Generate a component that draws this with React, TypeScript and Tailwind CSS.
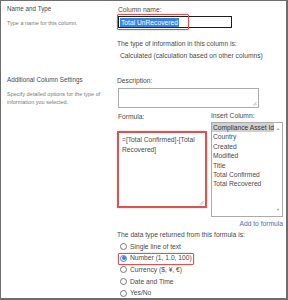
import React from "react";

// SharePoint "Create Column" form, formula section
const columns = [
  "Compliance Asset Id",
  "Country",
  "Created",
  "Modified",
  "Title",
  "Total Confirmed",
  "Total Recovered",
];

const dataTypes = [
  { label: "Single line of text", checked: false },
  { label: "Number (1, 1.0, 100)", checked: true },
  { label: "Currency ($, ¥, €)", checked: false },
  { label: "Date and Time", checked: false },
  { label: "Yes/No", checked: false },
];

const Grip = () => (
  <svg className="absolute right-[1px] bottom-[1px]" width="5" height="5" viewBox="0 0 5 5" aria-hidden="true">
    <path d="M4.5 1 L1 4.5 M4.5 3 L3 4.5" stroke="#9a9a9a" strokeWidth="0.7" />
  </svg>
);

const Radio = ({ checked }: { checked: boolean }) => (
  <span
    className={`w-[7px] h-[7px] rounded-full border flex items-center justify-center shrink-0 ${
      checked ? "border-[#3b82e6] bg-white" : "border-[#777] bg-white"
    }`}
  >
    {checked && <span className="w-[4px] h-[4px] rounded-full bg-[#3b82e6]" />}
  </span>
);

export default function App() {
  return (
    <div className="w-[288px] h-[300px] bg-white border-l border-t border-r-2 border-b-2 border-[#6e6e6e] overflow-hidden font-['Liberation_Sans',Arial,sans-serif] text-[#4a4a4a]">
      {/* --- NAME AND TYPE --- */}
      <div className="flex h-[67px]">
        <div className="w-[116px] pl-[6px] pt-[4px]">
          <h3 className="text-[6.3px] leading-[8px] text-[#4a4a4a]">Name and Type</h3>
          <p className="mt-[7px] text-[5.5px] leading-[7px] text-[#7a7a7a]">Type a name for this column.</p>
        </div>
        <div className="flex-1 pt-[4px] text-[6.7px]">
          <div className="leading-[10px] pl-[1px]">Column name:</div>
          <div className="relative mt-[1px] ml-[1px] w-[114px] h-[12px] border-[1.5px] border-[#1c1c1c] flex items-center pl-[1px]">
            <span className="bg-[#3a84e0] text-white leading-[9px] px-[1px]">Total UnRecovered</span>
            <div className="absolute -left-[2.5px] -top-[3.5px] w-[72px] h-[16px] border-[1.5px] border-[#e05252] rounded-[1px] shadow-[0_0_2px_rgba(0,0,0,0.25)]" />
          </div>
          <div className="mt-[11px] leading-[10px]">The type of information in this column is:</div>
          <div className="mt-[2px] pl-[3px] leading-[10px]">Calculated (calculation based on other columns)</div>
        </div>
      </div>

      {/* --- ADDITIONAL COLUMN SETTINGS --- */}
      <div className="flex">
        <div className="w-[116px] pl-[6px] pt-[8px]">
          <h3 className="text-[6.3px] leading-[8px] text-[#4a4a4a]">Additional Column Settings</h3>
          <p className="mt-[6px] text-[5.5px] leading-[8px] text-[#7a7a7a]">
            Specify detailed options for the type of
            <br />
            information you selected.
          </p>
        </div>
        <div className="flex-1 pt-[8px] text-[6.7px]">
          <div className="leading-[10px]">Description:</div>
          <div className="relative mt-[2px] ml-[1px] w-[141px] h-[20px] border border-[#ababab]">
            <Grip />
          </div>

          <div className="flex items-start mt-[3px]">
            <div className="w-[90px]">
              <div className="leading-[10px] pl-[1px] mt-[1px]">Formula:</div>
              <div className="relative mt-[9px] h-[77px] border-2 border-[#e05252] shadow-[0_0_2px_rgba(0,0,0,0.2)] px-[3px] pt-[2px] leading-[10px]">
                =[Total Confirmed]-[Total Recovered]
                <Grip />
              </div>
            </div>
            <div className="ml-[4px] w-[72px]">
              <div className="leading-[10px]">Insert Column:</div>
              <div className="mt-[1px] h-[95px] border border-[#ababab] flex">
                <ul className="flex-1">
                  {columns.map((c, i) => (
                    <li
                      key={c}
                      className={`leading-[9.4px] pl-[1px] whitespace-nowrap overflow-hidden ${i === 0 ? "bg-[#d0d0d0] text-[#333]" : ""}`}
                    >
                      {c}
                    </li>
                  ))}
                </ul>
                <div className="w-[9px] flex flex-col justify-between items-center text-[#a8a8a8] text-[4px] py-[3px]">
                  <span>▲</span>
                  <span>▼</span>
                </div>
              </div>
            </div>
          </div>

          <div className="w-[166px] text-right mt-[2px] leading-[10px] text-[#3b76b0]">Add to formula</div>
          <div className="mt-[1px] leading-[10px]">The data type returned from this formula is:</div>

          <div className="mt-[1px]">
            {dataTypes.map((d) => (
              <div key={d.label} className="relative flex items-center gap-[3px] h-[11.6px] pl-[3px]">
                <Radio checked={d.checked} />
                <span className="leading-[10px]">{d.label}</span>
                {d.checked && (
                  <div className="absolute left-[1px] top-[0px] w-[76px] h-[12.5px] border-[1.5px] border-[#e05252] rounded-[1px] shadow-[0_0_2px_rgba(0,0,0,0.25)]" />
                )}
              </div>
            ))}
          </div>
        </div>
      </div>
    </div>
  );
}
